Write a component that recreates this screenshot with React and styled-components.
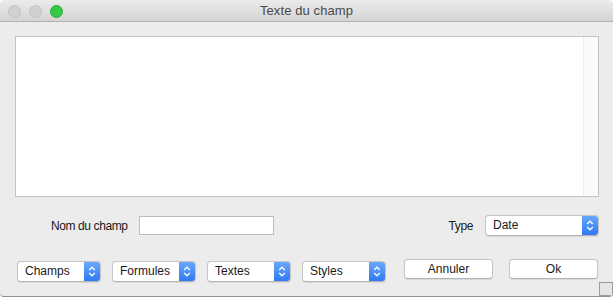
import React from 'react';
import styled, { createGlobalStyle } from 'styled-components';

const GlobalStyle = createGlobalStyle`
  html, body {
    margin: 0;
    padding: 0;
    background: #ffffff;
  }
  body {
    font-family: "Liberation Sans", Arial, sans-serif;
  }
`;

const Window = styled.div`
  position: relative;
  width: 613px;
  height: 297px;
  box-sizing: border-box;
  background: #ececec;
  border-bottom: 1px solid #8f8f8f;
  border-radius: 5px 5px 4px 4px;
  overflow: hidden;
  display: flex;
  flex-direction: column;
`;

const TitleBar = styled.div`
  position: relative;
  height: 21px;
  flex: 0 0 auto;
  background: linear-gradient(#ebebeb, #d4d4d4);
  border-bottom: 1px solid #b3b3b3;
  display: flex;
  align-items: center;
  justify-content: center;
`;

const Lights = styled.div`
  position: absolute;
  left: 8px;
  top: 5px;
  display: flex;
  gap: 8px;
`;

const Light = styled.span`
  width: 11px;
  height: 11px;
  border-radius: 50%;
  background: ${p => (p.$on ? '#35c947' : '#d1d1d1')};
  border: 1px solid ${p => (p.$on ? '#2aab35' : '#c2c2c2')};
`;

const Title = styled.div`
  font-size: 13px;
  color: #4a4a4a;
  letter-spacing: 0.1px;
`;

const Content = styled.div`
  flex: 1;
  display: flex;
  flex-direction: column;
  padding: 14px 14px 0 15px;
`;

const TextArea = styled.div`
  height: 161px;
  box-sizing: border-box;
  background: #ffffff;
  border: 1px solid #c3c3c3;
  display: flex;
  justify-content: flex-end;
`;

const ScrollTrack = styled.div`
  width: 14px;
  background: #fafafa;
  border-left: 1px solid #ededed;
`;

const FieldRow = styled.div`
  display: flex;
  align-items: center;
  margin-top: 18px;
  height: 21px;
  padding-left: 36px;
`;

const Label = styled.span`
  font-size: 12px;
  letter-spacing: -0.4px;
  color: #1a1a1a;
  margin-right: ${p => p.$gap || 12}px;
`;

const Input = styled.div`
  width: 135px;
  height: 19px;
  box-sizing: border-box;
  background: #ffffff;
  border: 1px solid #bdbdbd;
`;

const Spacer = styled.div`
  flex: 1;
`;

const Popup = styled.div`
  width: ${p => p.$w || 84}px;
  height: 21px;
  box-sizing: border-box;
  display: flex;
  align-items: stretch;
  background: #ffffff;
  border: 1px solid #c6c6c6;
  border-bottom-color: #b4b4b4;
  border-radius: 4px;
  overflow: hidden;
  box-shadow: 0 0.5px 1px rgba(0, 0, 0, 0.08);
`;

const PopupText = styled.span`
  flex: 1;
  font-size: 12px;
  color: #1a1a1a;
  padding-left: 7px;
  line-height: 19px;
`;

const Stepper = styled.span`
  width: 16px;
  display: flex;
  align-items: center;
  justify-content: center;
  background: linear-gradient(#6aa8fc, #2f79f4);
`;

const BottomRow = styled.div`
  display: flex;
  align-items: flex-start;
  margin-top: 23px;
  padding-left: 2px;
`;

const Popups = styled.div`
  display: flex;
  gap: 11px;
  margin-top: 2px;
`;

const Buttons = styled.div`
  display: flex;
  gap: 16px;
  margin-left: auto;
  margin-right: 1px;
`;

const Button = styled.div`
  width: 89px;
  height: 20px;
  box-sizing: border-box;
  background: #ffffff;
  border: 1px solid #c6c6c6;
  border-bottom-color: #b2b2b2;
  border-radius: 4px;
  font-size: 12px;
  color: #1a1a1a;
  display: flex;
  align-items: center;
  justify-content: center;
  box-shadow: 0 0.5px 1px rgba(0, 0, 0, 0.08);
`;

const Grip = styled.div`
  position: absolute;
  right: 0;
  bottom: 0;
  width: 12px;
  height: 12px;
  background: #e6e6e6;
  border: 1px solid #9c9c9c;
`;

function Chevrons() {
  return (
    <svg width="8" height="13" viewBox="0 0 8 13">
      <path d="M1.2 5 L4 2.2 L6.8 5" fill="none" stroke="#fff" strokeWidth="1.3" />
      <path d="M1.2 8 L4 10.8 L6.8 8" fill="none" stroke="#fff" strokeWidth="1.3" />
    </svg>
  );
}

function Select({ label, width }) {
  return (
    <Popup $w={width}>
      <PopupText>{label}</PopupText>
      <Stepper><Chevrons /></Stepper>
    </Popup>
  );
}

export default function App() {
  return (
    <>
      <GlobalStyle />
      <Window>
        <TitleBar>
          <Lights>
            <Light />
            <Light />
            <Light $on />
          </Lights>
          <Title>Texte du champ</Title>
        </TitleBar>
        <Content>
          <TextArea>
            <ScrollTrack />
          </TextArea>
          <FieldRow>
            <Label $gap={11}>Nom du champ</Label>
            <Input />
            <Spacer />
            <Label $gap={12}>Type</Label>
            <Select label="Date" width={114} />
          </FieldRow>
          <BottomRow>
            <Popups>
              <Select label="Champs" />
              <Select label="Formules" />
              <Select label="Textes" />
              <Select label="Styles" />
            </Popups>
            <Buttons>
              <Button>Annuler</Button>
              <Button>Ok</Button>
            </Buttons>
          </BottomRow>
        </Content>
        <Grip />
      </Window>
    </>
  );
}
